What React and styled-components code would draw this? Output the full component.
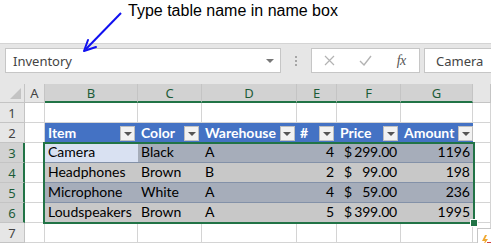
import React from "react"
import styled, { createGlobalStyle, css } from "styled-components"

const GlobalStyle = createGlobalStyle`
  html, body {
    margin: 0;
    padding: 0;
    background: #ffffff;
  }
  body {
    width: 491px;
    height: 243px;
    overflow: hidden;
    font-family: "Noto Sans", sans-serif;
  }
`

const GREEN = "#217346"

const Page = styled.div`
  position: relative;
  width: 491px;
  height: 243px;
  overflow: hidden;
`

const Note = styled.div`
  height: 43px;
  padding-left: 128px;
  box-sizing: border-box;
  font-family: "Liberation Sans", Arial, sans-serif;
  font-size: 16px;
  line-height: 20px;
  padding-top: 1px;
  color: #000;
`

const ArrowSvg = styled.svg`
  position: absolute;
  left: 78px;
  top: 8px;
  pointer-events: none;
`

const FormulaBar = styled.div`
  height: 41px;
  box-sizing: border-box;
  background: #e6e6e6;
  border-top: 1px solid #d4d4d4;
  display: flex;
  align-items: flex-start;
  padding: 4px 0 0 5px;
`

const Box = styled.div`
  flex: none;
  height: 25px;
  box-sizing: border-box;
  background: #fff;
  border: 1px solid #c6c6c6;
  display: flex;
  align-items: center;
  width: ${(p) => p.$w}px;
  margin-right: ${(p) => p.$mr || 0}px;
`

const BoxText = styled.span`
  font-size: 13px;
  color: #444;
  padding-left: ${(p) => p.$pl}px;
  flex: 1;
`

const Caret = styled.span`
  width: 0;
  height: 0;
  border-left: 4px solid transparent;
  border-right: 4px solid transparent;
  border-top: 4px solid #777;
  margin-right: 6px;
`

const Dots = styled.div`
  flex: none;
  width: 30px;
  height: 25px;
  display: flex;
  flex-direction: column;
  align-items: center;
  justify-content: center;
  gap: 2px;
  span {
    width: 2px;
    height: 2px;
    background: #a6a6a6;
  }
`

const FxBtn = styled.span`
  width: ${(p) => p.$w}px;
  display: flex;
  justify-content: center;
  align-items: center;
`

const FxText = styled.span`
  font-family: "Liberation Serif", serif;
  font-style: italic;
  font-size: 14px;
  color: #555;
  letter-spacing: -0.5px;
`

const Sheet = styled.div`
  position: relative;
  display: grid;
  grid-template-columns: 25px 20px 93px 64px 95px 40px 64px 72px 1fr;
  grid-template-rows: 19px repeat(7, 20px);
  font-family: Lato, "Liberation Sans", sans-serif;
`

const Corner = styled.div`
  position: relative;
  background: #e6e6e6;
  border-right: 1px solid #c4c4c4;
  border-bottom: 1px solid #c4c4c4;
  &::after {
    content: "";
    position: absolute;
    right: 3px;
    bottom: 3px;
    border-left: 11px solid transparent;
    border-bottom: 11px solid #c3c3c3;
  }
`

const ColHead = styled.div`
  box-sizing: border-box;
  background: ${(p) => (p.$sel ? "#d2d2d2" : "#e6e6e6")};
  color: ${(p) => (p.$sel ? "#1c5c38" : "#444")};
  border-right: 1px solid #c4c4c4;
  border-bottom: ${(p) => (p.$sel ? `2px solid ${GREEN}` : "1px solid #c4c4c4")};
  font-family: "Noto Sans", sans-serif;
  font-size: 13px;
  line-height: 18px;
  text-align: center;
`

const RowHead = styled.div`
  box-sizing: border-box;
  background: ${(p) => (p.$sel ? "#d2d2d2" : "#e6e6e6")};
  color: ${(p) => (p.$sel ? "#1c5c38" : "#444")};
  border-right: ${(p) => (p.$sel ? `2px solid ${GREEN}` : "1px solid #c4c4c4")};
  border-bottom: 1px solid #c4c4c4;
  font-family: "Noto Sans", sans-serif;
  font-size: 13px;
  line-height: 20px;
  text-align: center;
  padding-left: ${(p) => (p.$sel ? 1 : 0)}px;
`

const tones = {
  plain: css`
    background: #fff;
    border-right: 1px solid #d4d4d4;
    border-bottom: 1px solid #d4d4d4;
  `,
  head: css`
    background: #4472c4;
    color: #fff;
    font-weight: 700;
  `,
  dark: css`
    background: #a6adba;
    border-bottom: 1px solid #8391a8;
  `,
  light: css`
    background: #c8c8c8;
    border-bottom: 1px solid #8391a8;
  `,
  active: css`
    background: #d9e1f2;
    border-bottom: 1px solid #8391a8;
  `,
}

const Cell = styled.div`
  box-sizing: border-box;
  display: flex;
  align-items: flex-end;
  justify-content: ${(p) => (p.$right ? "flex-end" : "flex-start")};
  gap: 4px;
  padding: 0 3px 1px 3px;
  font-size: 14px;
  line-height: 18px;
  color: #000;
  white-space: nowrap;
  overflow: hidden;
  ${(p) => tones[p.$tone || "plain"]}
`

const HeadLabel = styled.span`
  flex: 1;
`

const FilterBtn = styled.span`
  width: 15px;
  height: 15px;
  box-sizing: border-box;
  margin-bottom: 1px;
  background: #f2f2f2;
  border: 1px solid #bfbfbf;
  display: flex;
  align-items: center;
  justify-content: center;
  flex: none;
  &::before {
    content: "";
    border-left: 4px solid transparent;
    border-right: 4px solid transparent;
    border-top: 4px solid #555;
  }
`

const Money = styled.span`
  flex: 1;
  display: flex;
  justify-content: space-between;
  padding: 0 1px 0 4px;
  letter-spacing: -0.2px;
`

const Selection = styled.div`
  position: absolute;
  left: 43px;
  top: 58px;
  width: 432px;
  height: 82px;
  box-sizing: border-box;
  border: 2px solid ${GREEN};
  pointer-events: none;
`

const Handle = styled.div`
  position: absolute;
  right: -5px;
  bottom: -5px;
  width: 6px;
  height: 6px;
  background: ${GREEN};
  border: 1px solid #fff;
`

const QuickIcon = styled.div`
  position: absolute;
  left: 477px;
  top: 228px;
  width: 20px;
  height: 20px;
  box-sizing: border-box;
  background: #fff;
  border: 1px solid #c6c6c6;
  padding: 3px 0 0 3px;
`

const cols = ["A", "B", "C", "D", "E", "F", "G", ""]
const heads = ["Item", "Color", "Warehouse", "#", "Price", "Amount"]
const rows = [
  ["Camera", "Black", "A", "4", "299.00", "1196"],
  ["Headphones", "Brown", "B", "2", "99.00", "198"],
  ["Microphone", "White", "A", "4", "59.00", "236"],
  ["Loudspeakers", "Brown", "A", "5", "399.00", "1995"],
]

const DataRow = ({ n, data }) => {
  const band = n % 2 === 1 ? "dark" : "light"
  return (
    <>
      <RowHead $sel>{n}</RowHead>
      <Cell />
      {data.map((v, i) => {
        const tone = n === 3 && i === 0 ? "active" : band
        if (i === 4)
          return (
            <Cell key={i} $tone={tone}>
              <Money>
                <span>$</span>
                <span>{v}</span>
              </Money>
            </Cell>
          )
        return (
          <Cell key={i} $tone={tone} $right={i === 3 || i === 5}>
            {v}
          </Cell>
        )
      })}
      <Cell />
    </>
  )
}

export default function App() {
  return (
    <Page>
      <GlobalStyle />
      <Note>Type table name in name box</Note>
      <ArrowSvg width="50" height="50" viewBox="0 0 50 50">
        <path d="M43 5 L8 41" stroke="#1010f0" strokeWidth="2" fill="none" />
        <path d="M6 43 L10 32 M6 43 L18 39" stroke="#1010f0" strokeWidth="2" fill="none" strokeLinecap="round" />
      </ArrowSvg>
      <FormulaBar>
        <Box $w={276}>
          <BoxText $pl={7}>Inventory</BoxText>
          <Caret />
        </Box>
        <Dots>
          <span />
          <span />
          <span />
        </Dots>
        <Box $w={109} $mr={4}>
          <FxBtn $w={36}>
            <svg width="11" height="11" viewBox="0 0 11 11">
              <path d="M1 1 L10 10 M10 1 L1 10" stroke="#b3b3b3" strokeWidth="1.2" />
            </svg>
          </FxBtn>
          <FxBtn $w={36}>
            <svg width="13" height="11" viewBox="0 0 13 11">
              <path d="M1 6 L5 10 L12 1" stroke="#b3b3b3" strokeWidth="1.4" fill="none" />
            </svg>
          </FxBtn>
          <FxBtn $w={36}>
            <FxText>fx</FxText>
          </FxBtn>
        </Box>
        <Box $w={80}>
          <BoxText $pl={11}>Camera</BoxText>
        </Box>
      </FormulaBar>
      <Sheet>
        <Corner />
        {cols.map((c, i) => (
          <ColHead key={i} $sel={i >= 1 && i <= 6}>
            {c}
          </ColHead>
        ))}

        <RowHead>1</RowHead>
        {cols.map((c, i) => (
          <Cell key={i} />
        ))}

        <RowHead>2</RowHead>
        <Cell />
        {heads.map((h) => (
          <Cell key={h} $tone="head">
            <HeadLabel>{h}</HeadLabel>
            <FilterBtn />
          </Cell>
        ))}
        <Cell />

        {rows.map((r, i) => (
          <DataRow key={i} n={i + 3} data={r} />
        ))}

        <RowHead>7</RowHead>
        {cols.map((c, i) => (
          <Cell key={i} />
        ))}

        <Selection>
          <Handle />
        </Selection>
      </Sheet>
      <QuickIcon>
        <svg width="14" height="14" viewBox="0 0 14 14">
          <path d="M4 0 L1 6 L4 6 L2 11 L7 4 L4 4 L6 0 Z" fill="#f0a830" />
          <rect x="6" y="7" width="8" height="1.5" fill="#d04040" />
          <rect x="6" y="10" width="8" height="1.5" fill="#3a6fc4" />
        </svg>
      </QuickIcon>
    </Page>
  )
}
